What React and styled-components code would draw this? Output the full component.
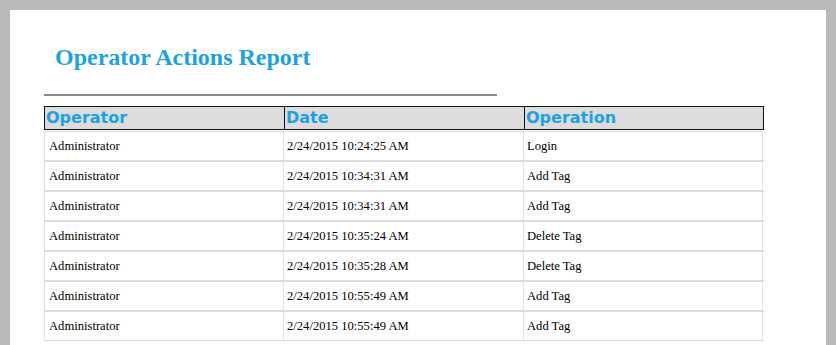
import React from 'react';
import styled, { createGlobalStyle } from 'styled-components';

const GlobalStyle = createGlobalStyle`
  html, body {
    margin: 0;
    padding: 0;
    background: #b9b9b9;
  }
`;

const Frame = styled.div`
  padding: 10px 10px 0 10px;
  height: 345px;
  box-sizing: border-box;
  overflow: hidden;
`;

const Sheet = styled.div`
  background: #ffffff;
  height: 100%;
  padding: 33px 0 0 34px;
  box-sizing: border-box;
`;

const Title = styled.h1`
  margin: 0 0 0 11px;
  font-family: "Liberation Serif", "Times New Roman", serif;
  font-weight: bold;
  font-size: 24px;
  line-height: 28px;
  color: #1ca2e1;
`;

const Rule = styled.hr`
  width: 453px;
  margin: 23px 0 0 0;
  border: 0;
  height: 2px;
  background: #8a8a8a;
`;

const Report = styled.div`
  width: 720px;
  margin-top: 10px;
`;

const Row = styled.div`
  display: grid;
  grid-template-columns: 239px 240px 240px;
`;

const HeadRow = styled(Row)`
  background: #dcdcdc;
  border: 1px solid #111;
  height: 22px;
  margin-bottom: 1px;
`;

const HeadCell = styled.div`
  font-family: "DejaVu Sans", Verdana, sans-serif;
  font-weight: bold;
  font-size: 16px;
  line-height: 21px;
  color: #1ca2e1;
  padding-left: 1px;
  border-left: ${(p) => (p.first ? '0' : '1px solid #111')};
  white-space: nowrap;
`;

const BodyRow = styled(Row)`
  height: 28px;
  border-top: 1px solid #dcdcdc;
  border-bottom: 1px solid #dcdcdc;
`;

const Cell = styled.div`
  display: flex;
  align-items: center;
  font-family: "Liberation Serif", "Times New Roman", serif;
  font-size: 12.6px;
  color: #000;
  padding-left: ${(p) => (p.first ? '4px' : '3px')};
  border-left: 1px solid #e4e4e4;
  border-right: ${(p) => (p.last ? '1px solid #e4e4e4' : '0')};
  white-space: nowrap;
`;

const actions = [
  ['Administrator', '2/24/2015 10:24:25 AM', 'Login'],
  ['Administrator', '2/24/2015 10:34:31 AM', 'Add Tag'],
  ['Administrator', '2/24/2015 10:34:31 AM', 'Add Tag'],
  ['Administrator', '2/24/2015 10:35:24 AM', 'Delete Tag'],
  ['Administrator', '2/24/2015 10:35:28 AM', 'Delete Tag'],
  ['Administrator', '2/24/2015 10:55:49 AM', 'Add Tag'],
  ['Administrator', '2/24/2015 10:55:49 AM', 'Add Tag'],
];

const App = () => {
  return (
    <Frame>
      <GlobalStyle />
      <Sheet>
        <Title>Operator Actions Report</Title>
        <Rule />
        <Report>
          <HeadRow>
            <HeadCell first>Operator</HeadCell>
            <HeadCell>Date</HeadCell>
            <HeadCell>Operation</HeadCell>
          </HeadRow>
          {actions.map((a, i) => (
            <BodyRow key={i}>
              <Cell first>{a[0]}</Cell>
              <Cell>{a[1]}</Cell>
              <Cell last>{a[2]}</Cell>
            </BodyRow>
          ))}
        </Report>
      </Sheet>
    </Frame>
  );
};

export default App;
